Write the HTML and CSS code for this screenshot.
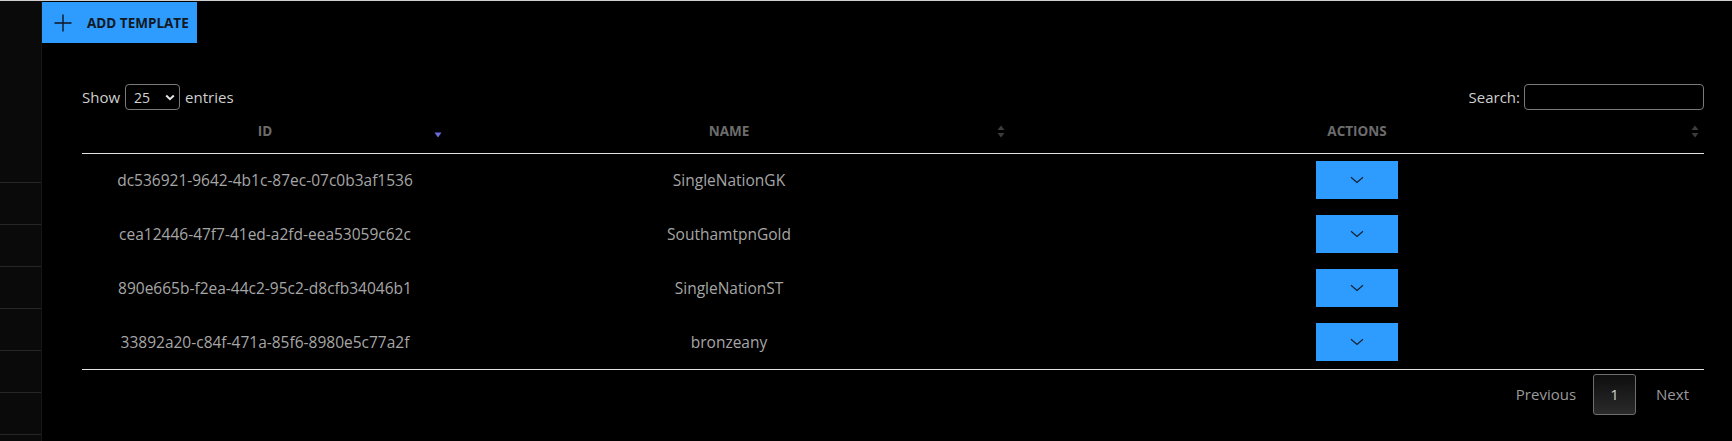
FILE: index.html
```html
<!DOCTYPE html>
<html lang="en">
<head>
<meta charset="utf-8">
<title>Templates</title>
<link rel="stylesheet" href="styles.css">
</head>
<body>
<div class="app">
  <aside class="sidebar">
    <ul class="side-list">
      <li></li><li></li><li></li><li></li><li></li><li></li><li></li>
    </ul>
  </aside>
  <main class="main">
    <button class="add-btn" type="button">
      <svg class="plus" width="18" height="18" viewBox="0 0 18 18" aria-hidden="true"><path d="M9 0.5V17.5M0.5 9H17.5" stroke="#10161f" stroke-width="1.4" fill="none"/></svg>
      <span>ADD TEMPLATE</span>
    </button>

    <section class="table-wrap">
      <div class="controls">
        <div class="length">
          <span>Show</span>
          <span class="select-wrap">
            <select class="len-select"><option>25</option><option>50</option><option>100</option></select>
            <svg class="sel-chev" width="10" height="7" viewBox="0 0 10 7" aria-hidden="true"><path d="M1.2 1.5L5 5.2L8.8 1.5" stroke="#e6e6e6" stroke-width="2" fill="none"/></svg>
          </span>
          <span>entries</span>
        </div>
        <label class="search">
          <span>Search:</span>
          <input type="search" class="search-input">
        </label>
      </div>

      <table class="data">
        <colgroup><col class="c-id"><col class="c-name"><col class="c-act"></colgroup>
        <thead>
          <tr>
            <th>ID<svg class="sort" width="8" height="6" viewBox="0 0 8 6" aria-hidden="true"><path d="M0.5 0.5H7.5L4 5.5Z" fill="#6b6be0"/></svg></th>
            <th>NAME<svg class="sort both" width="8" height="13" viewBox="0 0 8 13" aria-hidden="true"><path d="M4 0.5L7.5 5H0.5Z M0.5 8H7.5L4 12.5Z" fill="#3c3c3c"/></svg></th>
            <th>ACTIONS<svg class="sort both" width="8" height="13" viewBox="0 0 8 13" aria-hidden="true"><path d="M4 0.5L7.5 5H0.5Z M0.5 8H7.5L4 12.5Z" fill="#3c3c3c"/></svg></th>
          </tr>
        </thead>
        <tbody>
          <tr><td>dc536921-9642-4b1c-87ec-07c0b3af1536</td><td>SingleNationGK</td><td><button class="act-btn" type="button"><svg width="14" height="8" viewBox="0 0 14 8" aria-hidden="true"><path d="M1 1.2L7 6.5L13 1.2" stroke="#14202e" stroke-width="1.2" fill="none"/></svg></button></td></tr>
          <tr><td>cea12446-47f7-41ed-a2fd-eea53059c62c</td><td>SouthamtpnGold</td><td><button class="act-btn" type="button"><svg width="14" height="8" viewBox="0 0 14 8" aria-hidden="true"><path d="M1 1.2L7 6.5L13 1.2" stroke="#14202e" stroke-width="1.2" fill="none"/></svg></button></td></tr>
          <tr><td>890e665b-f2ea-44c2-95c2-d8cfb34046b1</td><td>SingleNationST</td><td><button class="act-btn" type="button"><svg width="14" height="8" viewBox="0 0 14 8" aria-hidden="true"><path d="M1 1.2L7 6.5L13 1.2" stroke="#14202e" stroke-width="1.2" fill="none"/></svg></button></td></tr>
          <tr><td>33892a20-c84f-471a-85f6-8980e5c77a2f</td><td>bronzeany</td><td><button class="act-btn" type="button"><svg width="14" height="8" viewBox="0 0 14 8" aria-hidden="true"><path d="M1 1.2L7 6.5L13 1.2" stroke="#14202e" stroke-width="1.2" fill="none"/></svg></button></td></tr>
        </tbody>
      </table>

      <div class="pagination">
        <span class="page-link">Previous</span>
        <span class="page-num">1</span>
        <span class="page-link">Next</span>
      </div>
    </section>
  </main>
</div>
</body>
</html>
```

FILE: styles.css
```css
* { box-sizing: border-box; }

html, body {
  margin: 0;
  padding: 0;
  background: #000;
  height: 100%;
}

body {
  font-family: "Open Sans", "Noto Sans", sans-serif;
  color: #a9a9a9;
  overflow: hidden;
}

.app {
  display: flex;
  height: 441px;
  overflow: hidden;
  border-top: 1px solid #cfcfcf;
}

.sidebar {
  width: 42px;
  flex: none;
  overflow: hidden;
  background: #0a0a0a;
  border-right: 1px solid #161616;
}

.side-list {
  list-style: none;
  margin: 181px 0 0 0;
  padding: 0;
}

.side-list li {
  height: 42px;
  border-top: 1px solid #262626;
}

.main {
  flex: 1;
  display: flex;
  flex-direction: column;
  align-items: flex-start;
  background: #000;
}

.add-btn {
  margin-top: 1px;
  height: 41px;
  width: 155px;
  display: flex;
  align-items: center;
  gap: 15px;
  padding: 0 0 0 12px;
  border: 0;
  background: #2e9bfe;
  color: #111923;
  font-family: "Open Sans", "Noto Sans", sans-serif;
  font-weight: 700;
  font-size: 13.5px;
  cursor: pointer;
}

.plus { flex: none; }

.table-wrap {
  margin: 41px 28px 0 40px;
  width: 1622px;
}

.controls {
  display: flex;
  justify-content: space-between;
  align-items: center;
  height: 26px;
  font-size: 15px;
  color: #cfcfcf;
}

.length {
  display: flex;
  align-items: center;
  gap: 5px;
}

.select-wrap {
  position: relative;
  display: inline-flex;
}

.len-select {
  appearance: none;
  -webkit-appearance: none;
  width: 55px;
  height: 26px;
  padding: 0 0 0 8px;
  border: 1px solid #7a7a7a;
  border-radius: 4px;
  background: #000;
  color: #d4d4d4;
  font-family: "Open Sans", "Noto Sans", sans-serif;
  font-size: 14px;
}

.sel-chev {
  position: absolute;
  right: 5px;
  top: 10px;
  pointer-events: none;
}

.search {
  display: flex;
  align-items: center;
  gap: 4px;
}

.search-input {
  width: 180px;
  height: 26px;
  border: 1px solid #7a7a7a;
  border-radius: 4px;
  background: #000;
  color: #ddd;
}

.data {
  width: 1622px;
  border-collapse: collapse;
  table-layout: fixed;
  border-bottom: 1px solid #e2e2e2;
}

.c-id { width: 366px; }
.c-name { width: 562px; }
.c-act { width: 694px; }

.data th {
  position: relative;
  height: 43px;
  padding: 0 10px;
  text-align: center;
  font-size: 13.5px;
  font-weight: 700;
  color: #6c6c6c;
  border-bottom: 1px solid #e2e2e2;
  vertical-align: middle;
}

.sort {
  position: absolute;
  right: 6px;
  top: 22px;
}

.sort.both {
  top: 15px;
  right: 5px;
}

.data td {
  height: 54px;
  padding: 0 10px;
  text-align: center;
  vertical-align: middle;
  font-size: 15.5px;
  color: #a6a6a6;
}

.act-btn {
  width: 82px;
  height: 38px;
  border: 0;
  padding: 0;
  background: #2e9bfe;
  display: inline-flex;
  align-items: center;
  justify-content: center;
  vertical-align: middle;
  cursor: pointer;
}

.pagination {
  display: flex;
  justify-content: flex-end;
  align-items: center;
  margin-top: 4px;
  gap: 2px;
  font-size: 15px;
}

.page-link {
  padding: 0 15px;
  color: #9a9a9a;
}

.page-num {
  width: 43px;
  height: 41px;
  margin-right: 3px;
  display: flex;
  align-items: center;
  justify-content: center;
  border: 1px solid #6e6e6e;
  border-radius: 3px;
  background: linear-gradient(to bottom, #0e0e0e 0%, #2a2a2a 100%);
  color: #cfcfcf;
}
```
